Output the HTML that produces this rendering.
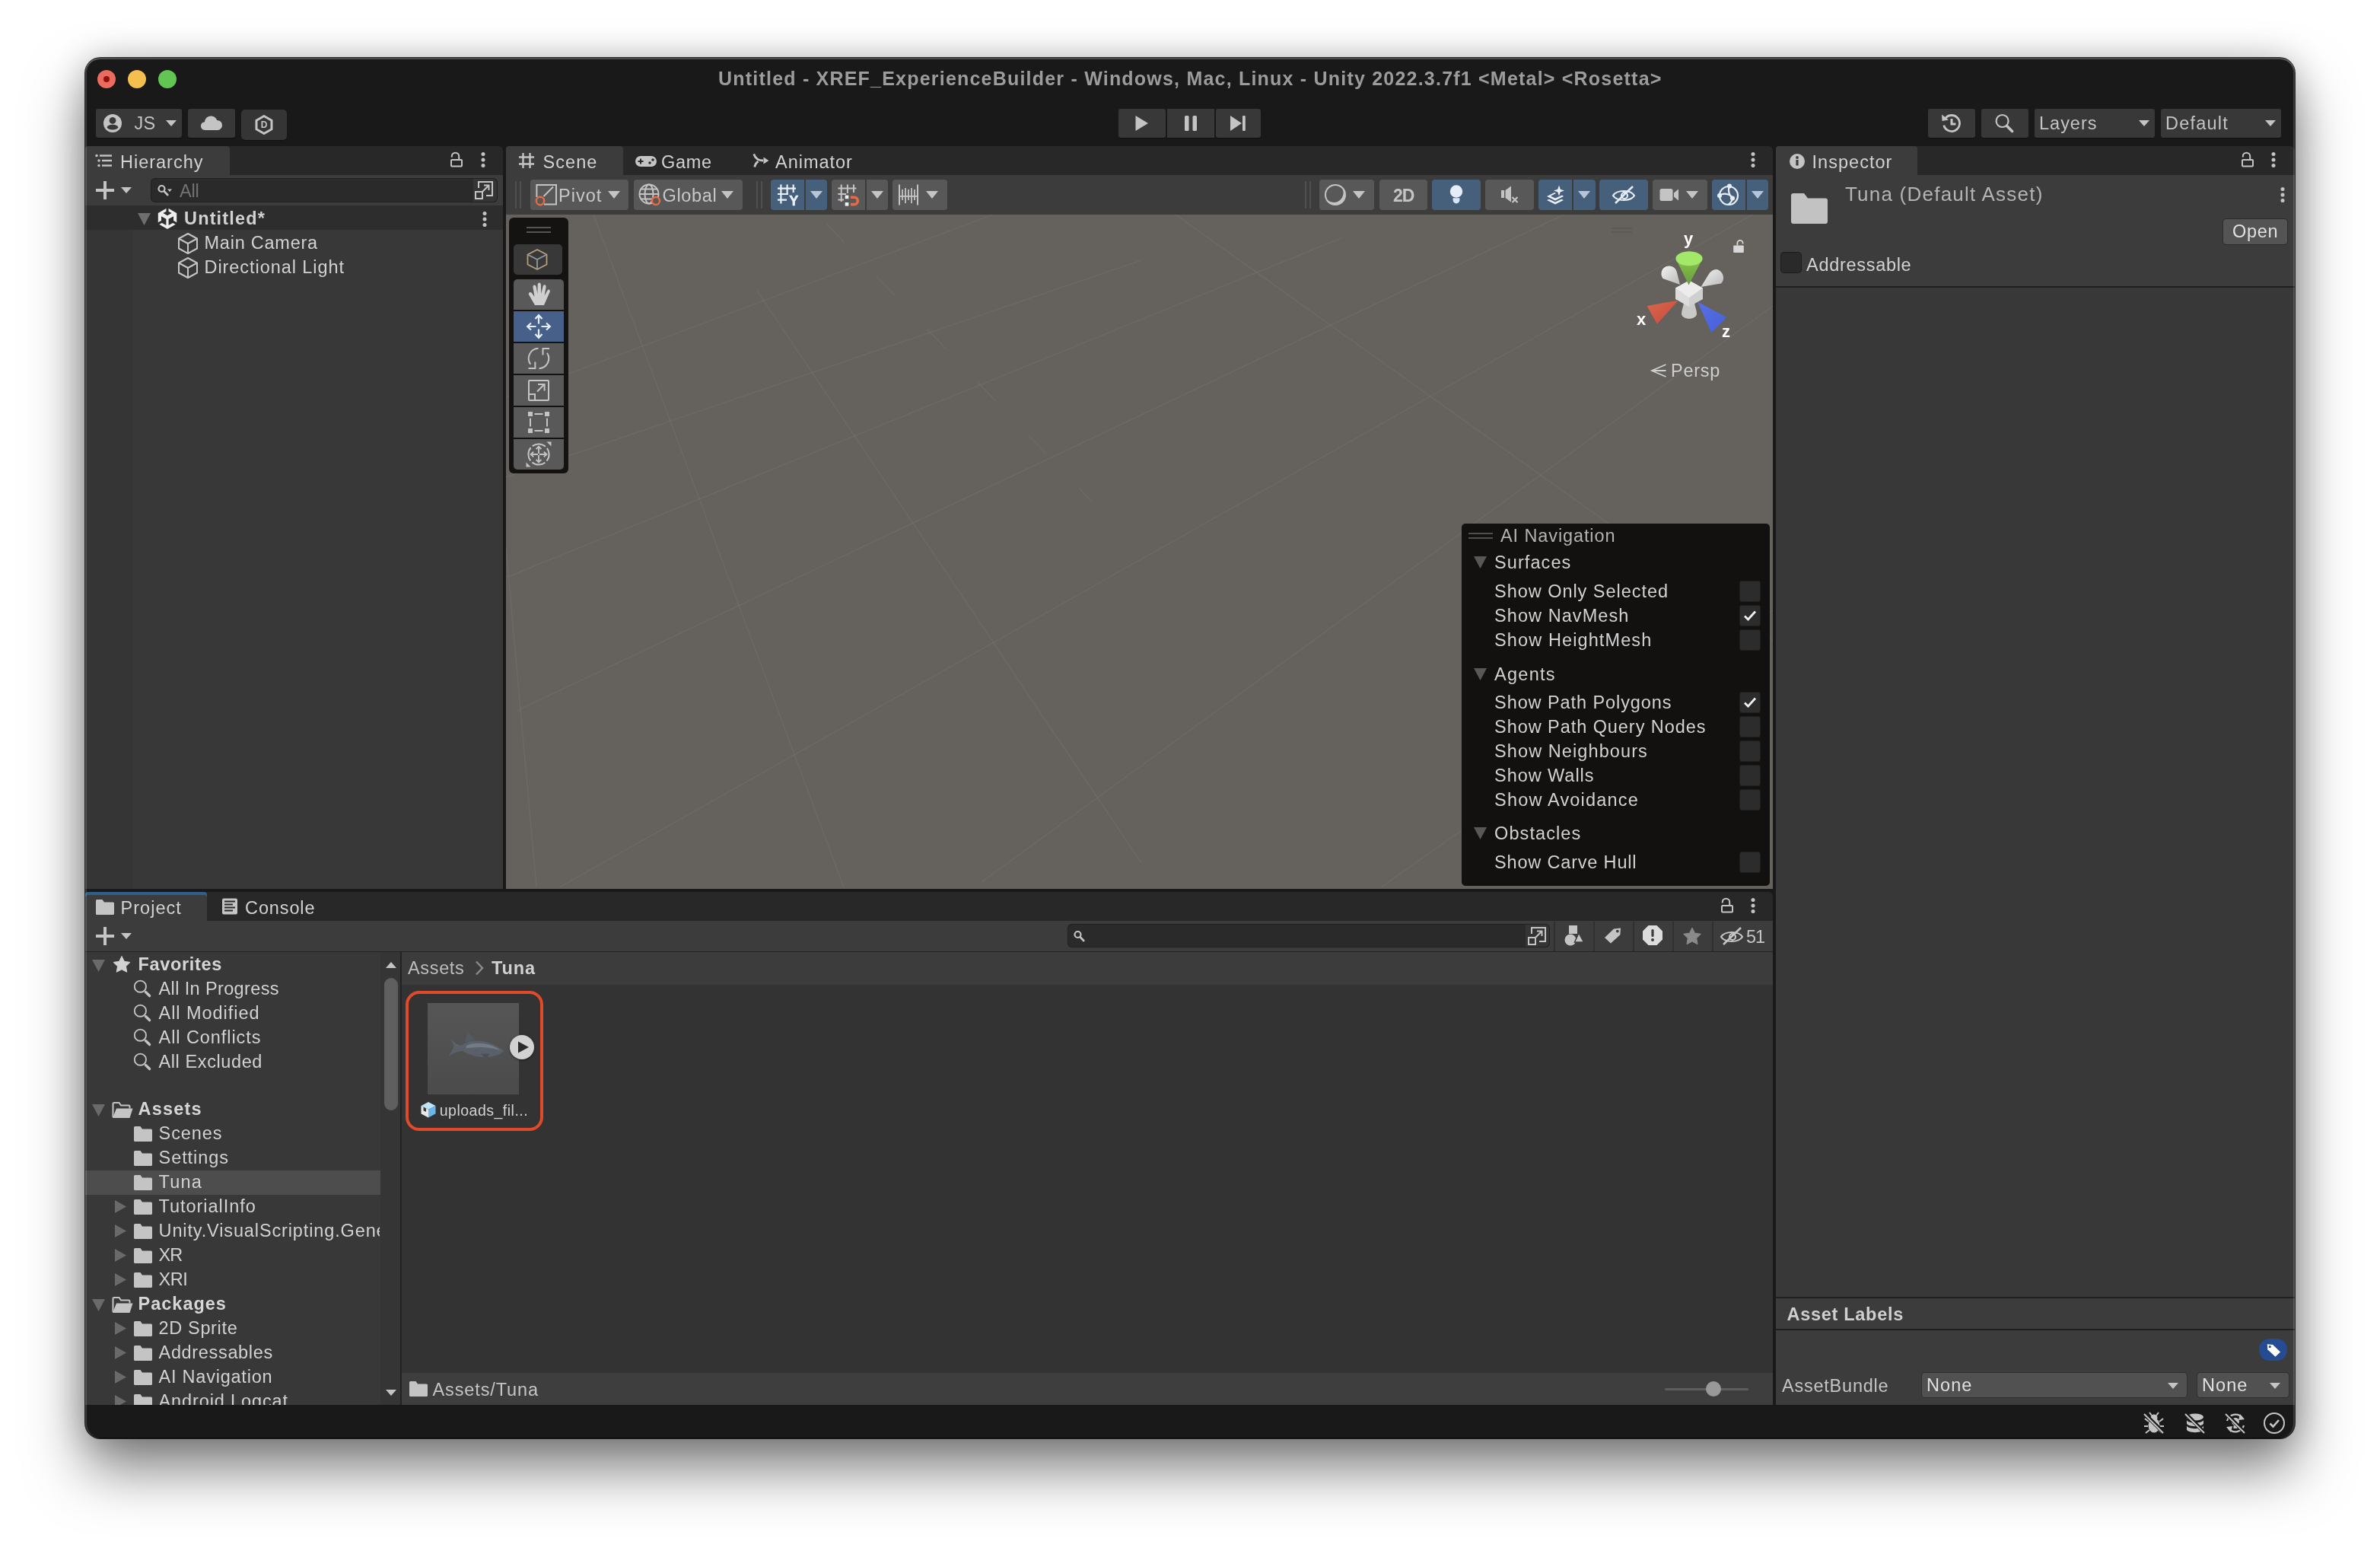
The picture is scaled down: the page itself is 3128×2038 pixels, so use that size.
<!DOCTYPE html>
<html lang="en"><head><meta charset="utf-8"><title>Untitled - XREF_ExperienceBuilder - Unity</title>
<style>
html,body{margin:0;padding:0;background:#fff;}
body{width:3128px;height:2038px;overflow:hidden;position:relative;font-family:'Liberation Sans', sans-serif;}
#shadow{position:absolute;left:112px;top:76px;width:2904px;height:1814px;border-radius:20px;
 box-shadow:0 0 0 1px rgba(0,0,0,.8),0 40px 76px rgba(0,0,0,.50),0 0 44px rgba(0,0,0,.20);background:#191919;}
#win{will-change:transform;position:absolute;left:0;top:0;width:3128px;height:2038px;clip-path:inset(76px 112px 148px 112px round 20px);background:#191919;}
#win div,#win svg,#win span{position:absolute;box-sizing:border-box;}
#win svg{overflow:visible;}
.t{white-space:pre;}
#rim{position:absolute;left:112px;top:76px;width:2904px;height:1814px;border-radius:20px;box-shadow:inset 0 2px 0 rgba(255,255,255,.22),inset 2px 0 0 rgba(255,255,255,.15),inset -2px 0 0 rgba(255,255,255,.15),inset 0 -1px 0 rgba(0,0,0,.5);pointer-events:none;}
</style></head>
<body>
<div id="shadow"></div>
<div id="win">
<div style="left:128px;top:92px;width:24px;height:24px;background:#ec6a5e;border-radius:50%;"></div>
<div style="left:168px;top:92px;width:24px;height:24px;background:#f5bf4f;border-radius:50%;"></div>
<div style="left:208px;top:92px;width:24px;height:24px;background:#62c554;border-radius:50%;"></div>
<div style="left:136px;top:100px;width:8px;height:8px;background:#8a1408;border-radius:50%;"></div>
<span class="t" style="left:944px;top:88.44px;font-size:25px;line-height:30px;color:#9c9c9c;font-weight:700;letter-spacing:1.21px;">Untitled - XREF_ExperienceBuilder - Windows, Mac, Linux - Unity 2022.3.7f1 &lt;Metal&gt; &lt;Rosetta&gt;</span>
<div style="left:126px;top:143px;width:113px;height:38px;background:#383838;border-radius:3px;box-shadow:0 1px 0 rgba(0,0,0,.35);"></div>
<svg style="left:135px;top:149px;" width="26" height="26" viewBox="-13 -13 26 26"><circle r="12" fill="#c4c4c4"/><circle cy="-3.6" r="4.4" fill="#383838"/><ellipse cx="0" cy="5.2" rx="7.2" ry="3.4" fill="#383838"/></svg>
<span class="t" style="left:176.56px;top:148.44px;font-size:23.5px;line-height:28px;color:#c4c4c4;letter-spacing:0.21px;">JS</span>
<svg style="left:217px;top:157px;" width="16" height="10" viewBox="-8 -5 16 10"><polygon points="-7.0,-4.0 7.0,-4.0 0,4.0" fill="#c4c4c4"/></svg>
<div style="left:247px;top:143px;width:62px;height:38px;background:#383838;border-radius:3px;box-shadow:0 1px 0 rgba(0,0,0,.35);"></div>
<svg style="left:262px;top:151px;" width="32" height="22" viewBox="-16 -11 32 22"><path d="M-8 9 C-12.5 9 -14 6 -14 3.5 C-14 0.5 -11.8 -1.6 -9 -1.8 C-8.6 -6.5 -5 -9.5 -0.8 -9.5 C3 -9.5 6 -7.4 7.2 -4 C11 -4 14 -1.2 14 2.6 C14 6.2 11.4 9 8 9 Z" fill="#c4c4c4" /></svg>
<div style="left:317px;top:144px;width:60px;height:40px;background:#353535;border-radius:5px;box-shadow:0 1px 0 rgba(0,0,0,.35);"></div>
<svg style="left:332px;top:149px;" width="30" height="30" viewBox="-15 -15 30 30"><polygon points="0,-11.5 10,-5.8 10,5.8 0,11.5 -10,5.8 -10,-5.8" fill="none" stroke="#c4c4c4" stroke-width="3" stroke-linejoin="round"/><text x="0" y="4.3" text-anchor="middle" font-family="Liberation Sans, sans-serif" font-weight="700" font-size="12" fill="#c4c4c4">D</text></svg>
<div style="left:1470px;top:143px;width:62px;height:38px;background:#383838;border-radius:3px;box-shadow:0 1px 0 rgba(0,0,0,.35);"></div>
<div style="left:1534px;top:143px;width:62px;height:38px;background:#383838;border-radius:0px;box-shadow:0 1px 0 rgba(0,0,0,.35);"></div>
<div style="left:1598px;top:143px;width:59px;height:38px;background:#383838;border-radius:3px;box-shadow:0 1px 0 rgba(0,0,0,.35);"></div>
<svg style="left:1489px;top:150px;" width="22" height="24" viewBox="-11 -12 22 24"><polygon points="-7.5,-10 9,0 -7.5,10" fill="#c4c4c4"/></svg>
<svg style="left:1554px;top:150px;" width="22" height="24" viewBox="-11 -12 22 24"><rect x="-8" y="-10" width="5.5" height="20" rx="1.5" fill="#c4c4c4"/><rect x="2.5" y="-10" width="5.5" height="20" rx="1.5" fill="#c4c4c4"/></svg>
<svg style="left:1615px;top:150px;" width="24" height="24" viewBox="-12 -12 24 24"><polygon points="-10,-10 5,0 -10,10" fill="#c4c4c4"/><rect x="6" y="-10" width="3.8" height="20" rx="1" fill="#c4c4c4"/></svg>
<div style="left:2534px;top:143px;width:62px;height:38px;background:#383838;border-radius:3px;box-shadow:0 1px 0 rgba(0,0,0,.35);"></div>
<svg style="left:2550px;top:147px;" width="30" height="30" viewBox="-15 -15 30 30"><path d="M-8.2 -6.6 A10.5 10.5 0 1 1 -10.2 2.6" fill="none" stroke="#c4c4c4" stroke-width="2.8"/><path d="M-13 -11.5 L-12.4 -3 L-4 -4.6 Z" fill="#c4c4c4"/><path d="M0 -6 V1 H5.4" fill="none" stroke="#c4c4c4" stroke-width="3"/></svg>
<div style="left:2604px;top:143px;width:62px;height:38px;background:#383838;border-radius:3px;box-shadow:0 1px 0 rgba(0,0,0,.35);"></div>
<svg style="left:2620px;top:148px;" width="28" height="28" viewBox="-14 -14 28 28"><circle cx="-2.4" cy="-3" r="8" fill="none" stroke="#c4c4c4" stroke-width="2.2"/><path d="M3.6 3.4 L10.6 10.4" stroke="#c4c4c4" stroke-width="3.6" stroke-linecap="round"/></svg>
<div style="left:2674px;top:143px;width:158px;height:38px;background:#383838;border-radius:3px;box-shadow:0 1px 0 rgba(0,0,0,.35);"></div>
<span class="t" style="left:2680.06px;top:148.44px;font-size:23.5px;line-height:28px;color:#c4c4c4;letter-spacing:0.97px;">Layers</span>
<svg style="left:2809.5px;top:157px;" width="16" height="10" viewBox="-8 -5 16 10"><polygon points="-7.0,-4.0 7.0,-4.0 0,4.0" fill="#c4c4c4"/></svg>
<div style="left:2840px;top:143px;width:158px;height:38px;background:#383838;border-radius:3px;box-shadow:0 1px 0 rgba(0,0,0,.35);"></div>
<span class="t" style="left:2846.06px;top:148.44px;font-size:23.5px;line-height:28px;color:#c4c4c4;letter-spacing:1.20px;">Default</span>
<svg style="left:2975.5px;top:157px;" width="16" height="10" viewBox="-8 -5 16 10"><polygon points="-7.0,-4.0 7.0,-4.0 0,4.0" fill="#c4c4c4"/></svg>
<div style="left:112px;top:192px;width:549px;height:38px;background:#282828;border-radius:6px 6px 0 0;"></div>
<div style="left:112px;top:192px;width:190px;height:38px;background:#3c3c3c;border-radius:4px 4px 0 0;"></div>
<div style="left:112px;top:230px;width:549px;height:40px;background:#3c3c3c;"></div>
<div style="left:112px;top:270px;width:549px;height:32px;background:#2d2d2d;"></div>
<div style="left:112px;top:302px;width:549px;height:866px;background:#383838;"></div>
<div style="left:112px;top:302px;width:63px;height:866px;background:#353535;"></div>
<svg style="left:124px;top:201px;" width="26" height="20" viewBox="-13 -10 26 20"><circle cx="-10" cy="-6.5" r="1.7" fill="#c4c4c4"/><rect x="-6" y="-7.7" width="16" height="2.4" fill="#c4c4c4"/><circle cx="-7" cy="0" r="1.7" fill="#c4c4c4"/><rect x="-3" y="-1.2" width="13" height="2.4" fill="#c4c4c4"/><circle cx="-7" cy="6.5" r="1.7" fill="#c4c4c4"/><rect x="-3" y="5.3" width="13" height="2.4" fill="#c4c4c4"/></svg>
<span class="t" style="left:158.06px;top:199.24px;font-size:23.5px;line-height:28px;color:#d2d2d2;letter-spacing:0.98px;">Hierarchy</span>
<svg style="left:590px;top:198px;" width="20" height="24" viewBox="-10 -12 20 24"><rect x="-7" y="0" width="14" height="8.5" rx="1" fill="none" stroke="#c4c4c4" stroke-width="2"/><path d="M-6.2 -3.4 V-4.6 A4.7 4.7 0 0 1 3.2 -4.6 V0" fill="none" stroke="#c4c4c4" stroke-width="2"/></svg>
<svg style="left:631px;top:198px;" width="8" height="24" viewBox="-4 -12 8 24"><circle cy="-7.5" r="2.5" fill="#c4c4c4"/><circle cy="0" r="2.5" fill="#c4c4c4"/><circle cy="7.5" r="2.5" fill="#c4c4c4"/></svg>
<svg style="left:125px;top:237px;" width="26" height="26" viewBox="-13 -13 26 26"><rect x="-12" y="-2" width="24" height="4" fill="#c4c4c4"/><rect x="-2" y="-12" width="4" height="24" fill="#c4c4c4"/></svg>
<svg style="left:158px;top:245px;" width="16" height="10" viewBox="-8 -5 16 10"><polygon points="-7.0,-4.0 7.0,-4.0 0,4.0" fill="#c4c4c4"/></svg>
<div style="left:198px;top:234px;width:456px;height:32px;background:#2a2a2a;border-radius:6px;box-shadow:inset 0 0 0 1px #212121;"></div>
<div style="left:622px;top:235px;width:31px;height:30px;background:#353535;border-radius:0 5px 5px 0;"></div>
<svg style="left:203px;top:241px;" width="24" height="18" viewBox="-12 -9 24 18"><circle cx="-2.5" cy="-2" r="4" fill="none" stroke="#c4c4c4" stroke-width="2.2"/><path d="M0.8 1.4 L5.2 6" stroke="#c4c4c4" stroke-width="2.8" stroke-linecap="round"/><polygon points="5,-1.5 11,-1.5 8,2" fill="#c4c4c4"/></svg>
<span class="t" style="left:236.06px;top:236.94px;font-size:23.5px;line-height:28px;color:#727272;letter-spacing:-0.26px;">All</span>
<svg style="left:622px;top:236px;" width="28" height="28" viewBox="-14 -14 28 28"><path d="M-7 -3 V-11 H11 V7 H3" fill="none" stroke="#c4c4c4" stroke-width="2"/><rect x="-11" y="2" width="9" height="9" fill="none" stroke="#c4c4c4" stroke-width="2"/><path d="M-2 2 L6 -6 M0 -6.5 H6.5 V0" fill="none" stroke="#c4c4c4" stroke-width="2"/></svg>
<svg style="left:179.5px;top:279px;" width="19" height="18" viewBox="-9.5 -9 19 18"><polygon points="-8.5,-8.0 8.5,-8.0 0,8.0" fill="#6e6e6e"/></svg>
<svg style="left:206px;top:272px;" width="28" height="30" viewBox="-14 -15 28 30"><polygon points="0,-14 12.2,-7 12.2,7 0,14 -12.2,7 -12.2,-7" fill="#ededed"/><polygon points="0,-10 5.6,-6.9 0,-3.8 -5.6,-6.9" fill="#2d2d2d"/><polygon points="-8,-2.8 -1.6,0.8 -1.6,9 -8,5.4" fill="#2d2d2d"/><polygon points="8,-2.8 1.6,0.8 1.6,9 8,5.4" fill="#2d2d2d"/><path d="M0 -14.5 V-9 M-12.6 7.3 L-7.6 4.4 M12.6 7.3 L7.6 4.4" stroke="#2d2d2d" stroke-width="3" fill="none"/></svg>
<span class="t" style="left:242.06px;top:272.94px;font-size:23.5px;line-height:28px;color:#d2d2d2;font-weight:700;letter-spacing:1.14px;">Untitled*</span>
<svg style="left:633px;top:276px;" width="8" height="24" viewBox="-4 -12 8 24"><circle cy="-7.5" r="2.5" fill="#c4c4c4"/><circle cy="0" r="2.5" fill="#c4c4c4"/><circle cy="7.5" r="2.5" fill="#c4c4c4"/></svg>
<svg style="left:232px;top:304px;" width="30" height="32" viewBox="-15 -16 30 32"><path d="M0 -13 L12 -6.5 V6.5 L0 13 L-12 6.5 V-6.5 Z M-12 -6.5 L0 0 L12 -6.5 M0 0 V13" fill="none" stroke="#c4c4c4" stroke-width="2" stroke-linejoin="round"/></svg>
<span class="t" style="left:268.56px;top:304.94px;font-size:23.5px;line-height:28px;color:#d2d2d2;letter-spacing:0.75px;">Main Camera</span>
<svg style="left:232px;top:336px;" width="30" height="32" viewBox="-15 -16 30 32"><path d="M0 -13 L12 -6.5 V6.5 L0 13 L-12 6.5 V-6.5 Z M-12 -6.5 L0 0 L12 -6.5 M0 0 V13" fill="none" stroke="#c4c4c4" stroke-width="2" stroke-linejoin="round"/></svg>
<span class="t" style="left:268.56px;top:336.94px;font-size:23.5px;line-height:28px;color:#d2d2d2;letter-spacing:0.93px;">Directional Light</span>
<div style="left:665px;top:192px;width:1665px;height:38px;background:#282828;border-radius:6px 6px 0 0;"></div>
<div style="left:665px;top:192px;width:154px;height:38px;background:#3c3c3c;border-radius:4px 4px 0 0;"></div>
<svg style="left:680px;top:199px;" width="24" height="24" viewBox="-12 -12 24 24"><path d="M-4.5 -10 V10 M4.5 -10 V10 M-10 -4.5 H10 M-10 4.5 H10" stroke="#c4c4c4" stroke-width="2.4" fill="none"/></svg>
<span class="t" style="left:713.56px;top:199.24px;font-size:23.5px;line-height:28px;color:#d2d2d2;letter-spacing:1.04px;">Scene</span>
<svg style="left:833px;top:203px;" width="32" height="18" viewBox="-16 -9 32 18"><rect x="-14" y="-7" width="28" height="14" rx="7" fill="#c4c4c4"/><path d="M-10.5 0 H-3.5 M-7 -3.5 V3.5" stroke="#282828" stroke-width="2"/><circle cx="5" cy="2" r="1.8" fill="#282828"/><circle cx="9" cy="-2" r="1.8" fill="#282828"/></svg>
<span class="t" style="left:869.06px;top:199.24px;font-size:23.5px;line-height:28px;color:#d2d2d2;letter-spacing:0.71px;">Game</span>
<svg style="left:987px;top:199px;" width="26" height="24" viewBox="-13 -12 26 24"><path d="M-9.2 -8.6 C-7.5 -3 -4 0 3 0 M-8.2 8.6 C-7.6 5 -6 2.6 -3.4 1" fill="none" stroke="#c4c4c4" stroke-width="2.8"/><polygon points="3.5,-4.4 10.4,0 3.5,4.4" fill="#c4c4c4"/></svg>
<span class="t" style="left:1019.06px;top:199.24px;font-size:23.5px;line-height:28px;color:#d2d2d2;letter-spacing:0.98px;">Animator</span>
<svg style="left:2300px;top:198px;" width="8" height="24" viewBox="-4 -12 8 24"><circle cy="-7.5" r="2.5" fill="#c4c4c4"/><circle cy="0" r="2.5" fill="#c4c4c4"/><circle cy="7.5" r="2.5" fill="#c4c4c4"/></svg>
<div style="left:665px;top:230px;width:1665px;height:52px;background:#3c3c3c;"></div>
<div style="left:665px;top:282px;width:1665px;height:886px;background:#65615c;"></div>
<svg style="left:665px;top:282px;overflow:hidden" width="1665" height="886" viewBox="0 0 1665 886"><g stroke="#ffffff" stroke-opacity="0.06" stroke-width="1.3" fill="none"><line x1="115" y1="0" x2="444" y2="884"/><line x1="330" y1="100" x2="835" y2="852"/><line x1="0" y1="438" x2="40" y2="884"/><line x1="880" y1="0" x2="1665" y2="560"/><line x1="14" y1="652" x2="1665" y2="-130"/><line x1="70" y1="884" x2="1665" y2="-15"/><line x1="625" y1="877" x2="1665" y2="120"/><line x1="1150" y1="884" x2="1665" y2="520"/><line x1="0" y1="477" x2="1100" y2="30"/><line x1="0" y1="345" x2="835" y2="60"/><line x1="0" y1="240" x2="640" y2="0"/><line x1="421" y1="12" x2="770" y2="377" stroke-dasharray="34 62"/></g></svg>
<div style="left:677px;top:238px;width:2px;height:36px;background:#4f4f4f;"></div>
<div style="left:683px;top:238px;width:2px;height:36px;background:#4f4f4f;"></div>
<div style="left:697px;top:236px;width:129px;height:40px;background:#585858;border-radius:4px;"></div>
<svg style="left:702px;top:240px;" width="32" height="32" viewBox="-16 -16 32 32"><path d="M-12.6 3 V-13 H13 V12.6 H-3" fill="none" stroke="#c4c4c4" stroke-width="2"/><path d="M-3.5 2 L9 -10.5" stroke="#c4c4c4" stroke-width="2"/><circle cx="-8" cy="8" r="5.2" fill="none" stroke="#e86a45" stroke-width="2.4"/></svg>
<span class="t" style="left:734.06px;top:242.94px;font-size:23.5px;line-height:28px;color:#c8c8c8;letter-spacing:1.02px;">Pivot</span>
<svg style="left:798px;top:250px;" width="18" height="12" viewBox="-9 -6 18 12"><polygon points="-8.0,-5.0 8.0,-5.0 0,5.0" fill="#c4c4c4"/></svg>
<div style="left:832.5px;top:236px;width:143.5px;height:40px;background:#585858;border-radius:4px;"></div>
<svg style="left:838px;top:240px;" width="32" height="32" viewBox="-16 -16 32 32"><circle cx="-1" cy="-1" r="12.5" fill="none" stroke="#c4c4c4" stroke-width="2"/><ellipse cx="-1" cy="-1" rx="5.5" ry="12.5" fill="none" stroke="#c4c4c4" stroke-width="2"/><path d="M-13.5 -1 H11.5 M-11 -7.5 H9 M-11 5.5 H4" stroke="#c4c4c4" stroke-width="2"/><circle cx="8" cy="8" r="5" fill="#585858" stroke="#e86a45" stroke-width="2.4"/></svg>
<span class="t" style="left:870.56px;top:242.94px;font-size:23.5px;line-height:28px;color:#c8c8c8;letter-spacing:0.65px;">Global</span>
<svg style="left:947px;top:250px;" width="18" height="12" viewBox="-9 -6 18 12"><polygon points="-8.0,-5.0 8.0,-5.0 0,5.0" fill="#c4c4c4"/></svg>
<div style="left:994px;top:238px;width:2px;height:36px;background:#4f4f4f;"></div>
<div style="left:1000px;top:238px;width:2px;height:36px;background:#4f4f4f;"></div>
<div style="left:1013px;top:236px;width:44px;height:40px;background:#46607c;border-radius:4px 0 0 4px;"></div>
<svg style="left:1020px;top:241px;" width="30" height="30" viewBox="-15 -15 30 30"><path d="M-8.6 -13.5 V11.5 M-0.4 -13.5 V-2 M7.7 -13.5 V-3 M-13 -8.4 H11 M-13 -1 H1 M-13 6.6 H-1" stroke="#eaf0f8" stroke-width="2.2" fill="none"/><text x="8.2" y="13.6" text-anchor="middle" font-family="Liberation Sans, sans-serif" font-weight="700" font-size="18" fill="#eaf0f8" stroke="#eaf0f8" stroke-width="0.6">Y</text></svg>
<div style="left:1059px;top:236px;width:28px;height:40px;background:#46607c;border-radius:0 4px 4px 0;"></div>
<svg style="left:1064px;top:250px;" width="18" height="12" viewBox="-9 -6 18 12"><polygon points="-8.0,-5.0 8.0,-5.0 0,5.0" fill="#b6c6d8"/></svg>
<div style="left:1093px;top:236px;width:43.5px;height:40px;background:#585858;border-radius:4px 0 0 4px;"></div>
<svg style="left:1100px;top:241px;" width="30" height="30" viewBox="-15 -15 30 30"><path d="M-9.3 -13.5 V9 M-1.1 -13.5 V-2 M7 -13.5 V-3 M-13.6 -8.4 H10.4 M-13.6 -1 H-3 M-13.6 6.6 H-6" stroke="#c4c4c4" stroke-width="2" fill="none"/><path d="M3 3.2 H7.6 A4.7 4.7 0 0 1 7.6 12.6 H3" fill="none" stroke="#e86a45" stroke-width="3.6"/><rect x="-4.3" y="0.6" width="4.6" height="4.6" fill="#f0f0f0"/><rect x="-4.3" y="10" width="4.6" height="4.6" fill="#f0f0f0"/></svg>
<div style="left:1138.5px;top:236px;width:28.5px;height:40px;background:#585858;border-radius:0 4px 4px 0;"></div>
<svg style="left:1144px;top:250px;" width="18" height="12" viewBox="-9 -6 18 12"><polygon points="-8.0,-5.0 8.0,-5.0 0,5.0" fill="#c4c4c4"/></svg>
<div style="left:1173px;top:236px;width:71.5px;height:40px;background:#585858;border-radius:4px;"></div>
<svg style="left:1179px;top:241px;" width="30" height="30" viewBox="-15 -15 30 30"><rect x="-13" y="-13.5" width="2" height="27" fill="#c4c4c4"/><rect x="11" y="-13.5" width="2" height="27" fill="#c4c4c4"/><rect x="-8.9" y="-7" width="1.8" height="14" fill="#c4c4c4"/><rect x="-4.9" y="-9" width="1.8" height="20" fill="#c4c4c4"/><rect x="-0.9" y="-7" width="1.8" height="14" fill="#c4c4c4"/><rect x="3.1" y="-9" width="1.8" height="20" fill="#c4c4c4"/><rect x="7.1" y="-7" width="1.8" height="14" fill="#c4c4c4"/><rect x="-12" y="1" width="24" height="1.8" fill="#c4c4c4"/></svg>
<svg style="left:1216px;top:250px;" width="18" height="12" viewBox="-9 -6 18 12"><polygon points="-8.0,-5.0 8.0,-5.0 0,5.0" fill="#c4c4c4"/></svg>
<div style="left:1715px;top:238px;width:2px;height:36px;background:#4f4f4f;"></div>
<div style="left:1721px;top:238px;width:2px;height:36px;background:#4f4f4f;"></div>
<div style="left:1734px;top:236px;width:72px;height:40px;background:#585858;border-radius:4px;"></div>
<svg style="left:1739px;top:240px;" width="32" height="32" viewBox="-16 -16 32 32"><circle r="13" fill="none" stroke="#c4c4c4" stroke-width="2"/><path d="M8 -10.2 A13 13 0 1 1 -12 5 A11.5 11.5 0 0 0 8 -10.2 Z" fill="#c4c4c4"/></svg>
<svg style="left:1777px;top:250px;" width="18" height="12" viewBox="-9 -6 18 12"><polygon points="-8.0,-5.0 8.0,-5.0 0,5.0" fill="#c4c4c4"/></svg>
<div style="left:1812.5px;top:236px;width:63.5px;height:40px;background:#585858;border-radius:4px;"></div>
<span class="t" style="left:1831.08px;top:242.94px;font-size:23px;line-height:28px;color:#c4c4c4;font-weight:700;letter-spacing:-1.20px;">2D</span>
<div style="left:1882px;top:236px;width:64px;height:40px;background:#46607c;border-radius:4px;"></div>
<svg style="left:1902px;top:240px;" width="24" height="32" viewBox="-12 -16 24 32"><circle cy="-4.5" r="8.2" fill="#e6edf7"/><path d="M-4.4 4.2 H4.4 V7 A4.4 4.4 0 0 1 -4.4 7 Z" fill="#d4e6fb"/></svg>
<div style="left:1952px;top:236px;width:64px;height:40px;background:#585858;border-radius:4px;"></div>
<svg style="left:1970px;top:242px;" width="28" height="28" viewBox="-14 -14 28 28"><rect x="-11" y="-6" width="4" height="10" fill="#c4c4c4"/><path d="M-5.5 -6 L2 -11.5 V9.5 L-5.5 4 Z" fill="#c4c4c4"/><path d="M3.5 3 L10.5 10 M10.5 3 L3.5 10" stroke="#c4c4c4" stroke-width="2.2"/></svg>
<div style="left:2022px;top:236px;width:44px;height:40px;background:#46607c;border-radius:4px 0 0 4px;"></div>
<svg style="left:2029px;top:241px;" width="30" height="30" viewBox="-15 -15 30 30"><path d="M-11 2 L-1 -3 L1 -2 L-6 1.5 L0 4.5 L9 0.5 L11 2 L0 7.5 Z" fill="#e8eef6"/><path d="M-11 7 L0 12.5 L11 7 L8 5.8 L0 9.6 L-8 5.8 Z" fill="#e8eef6"/><path d="M5 -12.5 L6.8 -7.3 L12 -5.5 L6.8 -3.7 L5 1.5 L3.2 -3.7 L-2 -5.5 L3.2 -7.3 Z" fill="#e8eef6"/></svg>
<div style="left:2068px;top:236px;width:29px;height:40px;background:#46607c;border-radius:0 4px 4px 0;"></div>
<svg style="left:2073px;top:250px;" width="18" height="12" viewBox="-9 -6 18 12"><polygon points="-8.0,-5.0 8.0,-5.0 0,5.0" fill="#b6c6d8"/></svg>
<div style="left:2102px;top:236px;width:64px;height:40px;background:#46607c;border-radius:4px;"></div>
<svg style="left:2117px;top:242px;" width="34" height="28" viewBox="-17 -14 34 28"><path d="M-14 1 C-9 -7 9 -7 14 1 C9 9 -9 9 -14 1 Z" fill="none" stroke="#e4ecf6" stroke-width="2.2"/><circle cx="1" cy="1" r="4" fill="none" stroke="#e4ecf6" stroke-width="2.2"/><path d="M-11 11 L12 -11" stroke="#e4ecf6" stroke-width="2.6"/></svg>
<div style="left:2172px;top:236px;width:72px;height:40px;background:#585858;border-radius:4px;"></div>
<svg style="left:2180px;top:245px;" width="28" height="22" viewBox="-14 -11 28 22"><rect x="-12.5" y="-8" width="17" height="16" rx="2.5" fill="#c4c4c4"/><path d="M6 -2.5 L12 -7.5 V7.5 L6 2.5 Z" fill="#c4c4c4"/></svg>
<svg style="left:2215px;top:250px;" width="18" height="12" viewBox="-9 -6 18 12"><polygon points="-8.0,-5.0 8.0,-5.0 0,5.0" fill="#c4c4c4"/></svg>
<div style="left:2250px;top:236px;width:44px;height:40px;background:#46607c;border-radius:4px 0 0 4px;"></div>
<svg style="left:2255px;top:239px;" width="34" height="34" viewBox="-17 -17 34 34"><circle cx="0" cy="1" r="12" fill="none" stroke="#e8eef6" stroke-width="2.2"/><path d="M-12 1 C-6 -4 4 0 5 4.5 M1 -11 C-2 -5 2 2 5 4.5 M5 4.5 C4 9 1 12 -1 13" fill="none" stroke="#e8eef6" stroke-width="2.2"/><circle cx="1" cy="-11.5" r="3" fill="#e8eef6"/><circle cx="-12" cy="1" r="3" fill="#e8eef6"/><circle cx="5" cy="4.5" r="3" fill="#e8eef6"/></svg>
<div style="left:2296px;top:236px;width:28px;height:40px;background:#46607c;border-radius:0 4px 4px 0;"></div>
<svg style="left:2301px;top:250px;" width="18" height="12" viewBox="-9 -6 18 12"><polygon points="-8.0,-5.0 8.0,-5.0 0,5.0" fill="#b6c6d8"/></svg>
<div style="left:669px;top:286px;width:78px;height:336px;background:#141312;border-radius:6px;"></div>
<div style="left:692px;top:298px;width:32px;height:2px;background:#555;"></div>
<div style="left:692px;top:304px;width:32px;height:2px;background:#555;"></div>
<div style="left:675px;top:321px;width:64px;height:40px;background:#383838;border-radius:5px;"></div>
<svg style="left:691px;top:325px;" width="30" height="32" viewBox="-15 -16 30 32"><path d="M0 -13 L12.5 -6.5 V6.5 L0 13 L-12.5 6.5 V-6.5 Z" fill="none" stroke="#b59e7c" stroke-width="1.8" stroke-linejoin="round"/><path d="M-12.5 -6.5 L0 0 L12.5 -6.5 M0 0 V13" fill="none" stroke="#8f9aa0" stroke-width="1.8"/></svg>
<div style="left:675px;top:367px;width:66px;height:40px;background:#595959;border-radius:5px 5px 0 0;"></div>
<svg style="left:691px;top:370px;" width="34" height="34" viewBox="-17 -17 34 34"><path d="M-5 14 L-12.5 1 C-14.5 -2.5 -11 -4.5 -9 -2 L-5.5 3 L-7.5 -9.5 C-8 -13 -4 -13.6 -3.4 -10.4 L-1.6 -1 L-1.3 -13 C-1.2 -16.4 2.8 -16.4 2.9 -13 L3.2 -1 L5.6 -10.8 C6.4 -14 10.2 -13 9.6 -9.8 L7.6 1.5 L11.2 -5 C12.8 -7.8 15.8 -6.2 14.6 -3.2 L7 14 Z" fill="#cfcfcf"/></svg>
<div style="left:675px;top:409px;width:66px;height:40px;background:#46608a;border-radius:0;"></div>
<svg style="left:691px;top:412px;" width="34" height="34" viewBox="-17 -17 34 34"><g transform="rotate(0)"><path d="M0 -3.5 V-14 M-4.5 -10 L0 -14.8 L4.5 -10" fill="none" stroke="#e8eef6" stroke-width="2.2"/></g><g transform="rotate(90)"><path d="M0 -3.5 V-14 M-4.5 -10 L0 -14.8 L4.5 -10" fill="none" stroke="#e8eef6" stroke-width="2.2"/></g><g transform="rotate(180)"><path d="M0 -3.5 V-14 M-4.5 -10 L0 -14.8 L4.5 -10" fill="none" stroke="#e8eef6" stroke-width="2.2"/></g><g transform="rotate(270)"><path d="M0 -3.5 V-14 M-4.5 -10 L0 -14.8 L4.5 -10" fill="none" stroke="#e8eef6" stroke-width="2.2"/></g></svg>
<div style="left:675px;top:451px;width:66px;height:40px;background:#595959;border-radius:0;"></div>
<svg style="left:691px;top:454px;" width="34" height="34" viewBox="-17 -17 34 34"><path d="M-0.5 -13.2 A13.2 13.2 0 0 0 -10.8 7.6 M0.5 13.2 A13.2 13.2 0 0 0 11 -7.3" fill="none" stroke="#c4c4c4" stroke-width="2"/><path d="M5.5 -4.6 V-12.9 H14.1 M-4.65 4.5 V13.1 H-13.5" fill="none" stroke="#c4c4c4" stroke-width="2"/></svg>
<div style="left:675px;top:493px;width:66px;height:40px;background:#595959;border-radius:0;"></div>
<svg style="left:691px;top:496px;" width="34" height="34" viewBox="-17 -17 34 34"><rect x="-13" y="-13" width="26" height="26" rx="1" fill="none" stroke="#c4c4c4" stroke-width="2"/><path d="M-13 5 H-5 V13" fill="none" stroke="#c4c4c4" stroke-width="2"/><path d="M-2 1.5 L7.2 -7.7 M-1 -8 H7.6 V0.6" fill="none" stroke="#c4c4c4" stroke-width="2"/></svg>
<div style="left:675px;top:535px;width:66px;height:40px;background:#595959;border-radius:0;"></div>
<svg style="left:691px;top:538px;" width="34" height="34" viewBox="-17 -17 34 34"><rect x="-14" y="-14" width="6" height="6" fill="#c4c4c4"/><rect x="-14" y="8" width="6" height="6" fill="#c4c4c4"/><rect x="8" y="-14" width="6" height="6" fill="#c4c4c4"/><rect x="8" y="8" width="6" height="6" fill="#c4c4c4"/><path d="M-5.5 -11 H5.5 M-5.5 11 H5.5 M-11 -5.5 V5.5 M11 -5.5 V5.5" stroke="#c4c4c4" stroke-width="2"/></svg>
<div style="left:675px;top:577px;width:66px;height:40px;background:#595959;border-radius:0 0 5px 5px;"></div>
<svg style="left:690px;top:579px;" width="36" height="36" viewBox="-18 -18 36 36"><g transform="rotate(0)"><path d="M0 -1 V-10 M-3.4 -6.8 L0 -10.4 L3.4 -6.8" fill="none" stroke="#c4c4c4" stroke-width="1.9"/></g><g transform="rotate(90)"><path d="M0 -1 V-10 M-3.4 -6.8 L0 -10.4 L3.4 -6.8" fill="none" stroke="#c4c4c4" stroke-width="1.9"/></g><g transform="rotate(180)"><path d="M0 -1 V-10 M-3.4 -6.8 L0 -10.4 L3.4 -6.8" fill="none" stroke="#c4c4c4" stroke-width="1.9"/></g><g transform="rotate(270)"><path d="M0 -1 V-10 M-3.4 -6.8 L0 -10.4 L3.4 -6.8" fill="none" stroke="#c4c4c4" stroke-width="1.9"/></g><circle r="13.6" fill="none" stroke="#c4c4c4" stroke-width="2" stroke-dasharray="18.4 2.96" stroke-dashoffset="9.2"/><polygon points="10.5,-16.5 16.5,-16.5 16.5,-10.5" fill="#c4c4c4"/><polygon points="-10.5,16.5 -16.5,16.5 -16.5,10.5" fill="#c4c4c4"/></svg>
<div style="left:2117px;top:299px;width:28px;height:1.5px;background:rgba(0,0,0,.07);"></div>
<div style="left:2117px;top:304px;width:28px;height:1.5px;background:rgba(0,0,0,.07);"></div>
<svg style="left:0;top:0" width="3128" height="600" viewBox="0 0 3128 600">
<defs>
<linearGradient id="gzc" x1="0" y1="0" x2="1" y2="1"><stop offset="0" stop-color="#f2f2f2"/><stop offset="1" stop-color="#b9b9b9"/></linearGradient>
<linearGradient id="gzg" x1="0" y1="0" x2="0" y2="1"><stop offset="0" stop-color="#84c24c"/><stop offset="1" stop-color="#6a9a3e"/></linearGradient>
<linearGradient id="gzr" x1="0" y1="0" x2="1" y2="1"><stop offset="0" stop-color="#d9674d"/><stop offset="1" stop-color="#c94a3c"/></linearGradient>
<linearGradient id="gzb" x1="0" y1="0" x2="1" y2="1"><stop offset="0" stop-color="#5a6fe6"/><stop offset="1" stop-color="#4560d8"/></linearGradient>
</defs>
<path d="M2208 374 L2185.5 366 C2181 360 2184 350 2193 349.5 C2199 349 2203 353 2204 358 Z" fill="url(#gzc)"/>
<path d="M2235.5 377 L2262 372.5 C2267 368 2266 358 2258 354.5 C2253 353 2249 356 2246 360 Z" fill="url(#gzc)"/>
<path d="M2213 398 L2227 398 C2228 404 2230 408 2230 412 C2230 421 2210 421 2210 412 C2210 408 2212 404 2213 398 Z" fill="#c9c9c9"/>
<polygon points="2220,368.5 2238,378.5 2238,392.5 2220,402.5 2202,392.5 2202,378.5" fill="#d2d2d2"/>
<polygon points="2220,368.5 2238,378.5 2220,391.5 2202,378.5" fill="#ececec"/>
<polygon points="2202,378.5 2220,391.5 2220,403 2202,393" fill="#dcdcdc"/>
<polygon points="2238,378.5 2220,391.5 2220,403 2238,393" fill="#cfcfcf"/>
<path d="M2203.5 342 L2219.5 374.5 L2236.5 342 Z" fill="url(#gzg)"/>
<ellipse cx="2220" cy="339.7" rx="17.6" ry="9.5" fill="#a3e868"/>
<polygon points="2206,394.5 2164.5,402 2178,425.7" fill="url(#gzr)"/>
<polygon points="2231,396.6 2269.5,417 2249.2,437.2" fill="url(#gzb)"/>
</svg>
<span class="t" style="left:2213.12px;top:300.64px;font-size:22px;line-height:26px;color:#ffffff;font-weight:700;">y</span>
<span class="t" style="left:2151.12px;top:406.64px;font-size:22px;line-height:26px;color:#ffffff;font-weight:700;">x</span>
<span class="t" style="left:2263.12px;top:423.14px;font-size:22px;line-height:26px;color:#ffffff;font-weight:700;">z</span>
<svg style="left:2275px;top:312px;" width="20" height="24" viewBox="-10 -12 20 24"><rect x="-6.8" y="-1.5" width="13.6" height="9.6" rx="1" fill="#d8d8d8"/><path d="M-1.6 -1.5 V-4.6 A3.6 3.6 0 0 1 5.6 -4.6 V-3.4" fill="none" stroke="#d8d8d8" stroke-width="1.8"/></svg>
<svg style="left:2168px;top:475px;" width="24" height="24" viewBox="-12 -12 24 24"><path d="M9.5 -8 L-9 0 L9.5 8 M-9 0 H9.5" fill="none" stroke="#cfcfcf" stroke-width="1.8"/></svg>
<span class="t" style="left:2196.06px;top:473.44px;font-size:23.5px;line-height:28px;color:#cfcfcf;letter-spacing:0.69px;">Persp</span>
<div style="left:1920.5px;top:687.5px;width:405.5px;height:476.5px;background:#131110;border-radius:5px;"></div>
<div style="left:1930px;top:700px;width:32px;height:2px;background:#4e4e4e;"></div>
<div style="left:1930px;top:706px;width:32px;height:2px;background:#4e4e4e;"></div>
<span class="t" style="left:1972.06px;top:690.44px;font-size:23.5px;line-height:28px;color:#b2b2b2;letter-spacing:0.89px;">AI Navigation</span>
<svg style="left:1935.5px;top:730px;" width="19" height="18" viewBox="-9.5 -9 19 18"><polygon points="-8.5,-8.0 8.5,-8.0 0,8.0" fill="#585858"/></svg>
<span class="t" style="left:1964.06px;top:725.44px;font-size:23.5px;line-height:28px;color:#d2d2d2;letter-spacing:1.07px;">Surfaces</span>
<span class="t" style="left:1964.06px;top:763.44px;font-size:23.5px;line-height:28px;color:#d2d2d2;letter-spacing:0.96px;">Show Only Selected</span>
<div style="left:2286px;top:763px;width:28px;height:28px;background:#2c2c2c;border-radius:4px;box-shadow:inset 0 0 0 1px #1e1e1e;"></div>
<span class="t" style="left:1964.06px;top:795.44px;font-size:23.5px;line-height:28px;color:#d2d2d2;letter-spacing:1.06px;">Show NavMesh</span>
<div style="left:2286px;top:795px;width:28px;height:28px;background:#2c2c2c;border-radius:4px;box-shadow:inset 0 0 0 1px #1e1e1e;"></div>
<svg style="left:2288px;top:797px;" width="24" height="24" viewBox="-12 -12 24 24"><path d="M-7 0.5 L-2.5 5 L7 -5.5" fill="none" stroke="#f0f0f0" stroke-width="2.8"/></svg>
<span class="t" style="left:1964.06px;top:827.44px;font-size:23.5px;line-height:28px;color:#d2d2d2;letter-spacing:1.11px;">Show HeightMesh</span>
<div style="left:2286px;top:827px;width:28px;height:28px;background:#2c2c2c;border-radius:4px;box-shadow:inset 0 0 0 1px #1e1e1e;"></div>
<svg style="left:1935.5px;top:876.5px;" width="19" height="18" viewBox="-9.5 -9 19 18"><polygon points="-8.5,-8.0 8.5,-8.0 0,8.0" fill="#585858"/></svg>
<span class="t" style="left:1964.06px;top:871.94px;font-size:23.5px;line-height:28px;color:#d2d2d2;letter-spacing:1.28px;">Agents</span>
<span class="t" style="left:1964.06px;top:909.44px;font-size:23.5px;line-height:28px;color:#d2d2d2;letter-spacing:0.92px;">Show Path Polygons</span>
<div style="left:2286px;top:909px;width:28px;height:28px;background:#2c2c2c;border-radius:4px;box-shadow:inset 0 0 0 1px #1e1e1e;"></div>
<svg style="left:2288px;top:911px;" width="24" height="24" viewBox="-12 -12 24 24"><path d="M-7 0.5 L-2.5 5 L7 -5.5" fill="none" stroke="#f0f0f0" stroke-width="2.8"/></svg>
<span class="t" style="left:1964.06px;top:941.44px;font-size:23.5px;line-height:28px;color:#d2d2d2;letter-spacing:0.94px;">Show Path Query Nodes</span>
<div style="left:2286px;top:941px;width:28px;height:28px;background:#2c2c2c;border-radius:4px;box-shadow:inset 0 0 0 1px #1e1e1e;"></div>
<span class="t" style="left:1964.06px;top:973.44px;font-size:23.5px;line-height:28px;color:#d2d2d2;letter-spacing:1.09px;">Show Neighbours</span>
<div style="left:2286px;top:973px;width:28px;height:28px;background:#2c2c2c;border-radius:4px;box-shadow:inset 0 0 0 1px #1e1e1e;"></div>
<span class="t" style="left:1964.06px;top:1005.44px;font-size:23.5px;line-height:28px;color:#d2d2d2;letter-spacing:0.95px;">Show Walls</span>
<div style="left:2286px;top:1005px;width:28px;height:28px;background:#2c2c2c;border-radius:4px;box-shadow:inset 0 0 0 1px #1e1e1e;"></div>
<span class="t" style="left:1964.06px;top:1037.44px;font-size:23.5px;line-height:28px;color:#d2d2d2;letter-spacing:1.18px;">Show Avoidance</span>
<div style="left:2286px;top:1037px;width:28px;height:28px;background:#2c2c2c;border-radius:4px;box-shadow:inset 0 0 0 1px #1e1e1e;"></div>
<svg style="left:1935.5px;top:1086px;" width="19" height="18" viewBox="-9.5 -9 19 18"><polygon points="-8.5,-8.0 8.5,-8.0 0,8.0" fill="#585858"/></svg>
<span class="t" style="left:1964.06px;top:1081.44px;font-size:23.5px;line-height:28px;color:#d2d2d2;letter-spacing:1.09px;">Obstacles</span>
<span class="t" style="left:1964.06px;top:1119.44px;font-size:23.5px;line-height:28px;color:#d2d2d2;letter-spacing:0.82px;">Show Carve Hull</span>
<div style="left:2286px;top:1119px;width:28px;height:28px;background:#2c2c2c;border-radius:4px;box-shadow:inset 0 0 0 1px #1e1e1e;"></div>
<div style="left:2334px;top:192px;width:682px;height:38px;background:#282828;border-radius:6px 6px 0 0;"></div>
<div style="left:2334px;top:192px;width:186px;height:38px;background:#3c3c3c;border-radius:4px 4px 0 0;"></div>
<svg style="left:2350px;top:200px;" width="24" height="24" viewBox="-12 -12 24 24"><circle r="10" fill="#c4c4c4"/><rect x="-1.6" y="-2" width="3.2" height="7.5" fill="#3c3c3c"/><circle cy="-5" r="1.9" fill="#3c3c3c"/></svg>
<span class="t" style="left:2381.56px;top:199.24px;font-size:23.5px;line-height:28px;color:#d2d2d2;letter-spacing:1.02px;">Inspector</span>
<svg style="left:2944px;top:198px;" width="20" height="24" viewBox="-10 -12 20 24"><rect x="-7" y="0" width="14" height="8.5" rx="1" fill="none" stroke="#c4c4c4" stroke-width="2"/><path d="M-6.2 -3.4 V-4.6 A4.7 4.7 0 0 1 3.2 -4.6 V0" fill="none" stroke="#c4c4c4" stroke-width="2"/></svg>
<svg style="left:2984px;top:198px;" width="8" height="24" viewBox="-4 -12 8 24"><circle cy="-7.5" r="2.5" fill="#c4c4c4"/><circle cy="0" r="2.5" fill="#c4c4c4"/><circle cy="7.5" r="2.5" fill="#c4c4c4"/></svg>
<div style="left:2334px;top:230px;width:682px;height:146px;background:#3c3c3c;"></div>
<div style="left:2334px;top:376px;width:682px;height:2px;background:#1f1f1f;"></div>
<div style="left:2334px;top:378px;width:682px;height:1327px;background:#383838;"></div>
<svg style="left:2354px;top:254px" width="48" height="40" viewBox="0 0 48 40"><path d="M0 3 Q0 0 3 0 H17 L22 6.5 H45 Q48 6.5 48 9.5 V37 Q48 40 45 40 H3 Q0 40 0 37 Z" fill="#c2c2c2"/></svg>
<span class="t" style="left:2424.96px;top:240.24px;font-size:26px;line-height:31px;color:#b4b4b4;letter-spacing:1.23px;">Tuna (Default Asset)</span>
<svg style="left:2996px;top:244px;" width="8" height="24" viewBox="-4 -12 8 24"><circle cy="-7.5" r="2.5" fill="#c4c4c4"/><circle cy="0" r="2.5" fill="#c4c4c4"/><circle cy="7.5" r="2.5" fill="#c4c4c4"/></svg>
<div style="left:2922px;top:288px;width:84px;height:33px;background:#545454;border-radius:4px;box-shadow:0 0 0 1px #2c2c2c;"></div>
<span class="t" style="left:2934.06px;top:290.44px;font-size:23.5px;line-height:28px;color:#e0e0e0;letter-spacing:0.71px;">Open</span>
<div style="left:2341px;top:332px;width:26px;height:26px;background:#2a2a2a;border-radius:4px;box-shadow:0 0 0 1px #1c1c1c;"></div>
<span class="t" style="left:2374.06px;top:333.94px;font-size:23.5px;line-height:28px;color:#d2d2d2;letter-spacing:0.70px;">Addressable</span>
<div style="left:2334px;top:1704px;width:682px;height:2px;background:#1f1f1f;"></div>
<div style="left:2334px;top:1706px;width:682px;height:40px;background:#3c3c3c;"></div>
<span class="t" style="left:2348.56px;top:1713.44px;font-size:23.5px;line-height:28px;color:#cfcfcf;font-weight:700;letter-spacing:0.70px;">Asset Labels</span>
<div style="left:2334px;top:1746px;width:682px;height:2px;background:#1f1f1f;"></div>
<div style="left:2334px;top:1748px;width:682px;height:98px;background:#3c3c3c;"></div>
<div style="left:2969px;top:1759px;width:37px;height:29px;background:#254b93;border-radius:14px;"></div>
<svg style="left:2973.5px;top:1759.5px;" width="28" height="28" viewBox="-14 -14 28 28"><g transform="scale(-0.82,0.82)"><path d="M-11 3 L1 -8.6 L10 -9.6 L9.4 -0.8 L-3 10.6 Z" fill="#ffffff"/><circle cx="5.8" cy="-5.4" r="1.9" fill="#254b93"/></g></svg>
<span class="t" style="left:2342.06px;top:1807.44px;font-size:23.5px;line-height:28px;color:#c4c4c4;letter-spacing:0.76px;">AssetBundle</span>
<div style="left:2526px;top:1803.5px;width:348px;height:32.5px;background:#515151;border-radius:4px;box-shadow:0 0 0 1px #303030;"></div>
<span class="t" style="left:2532.06px;top:1806.44px;font-size:23.5px;line-height:28px;color:#e0e0e0;letter-spacing:1.04px;">None</span>
<svg style="left:2848px;top:1816px;" width="16" height="10" viewBox="-8 -5 16 10"><polygon points="-7.0,-4.0 7.0,-4.0 0,4.0" fill="#c4c4c4"/></svg>
<div style="left:2888px;top:1803.5px;width:120px;height:32.5px;background:#515151;border-radius:4px;box-shadow:0 0 0 1px #303030;"></div>
<span class="t" style="left:2894.06px;top:1806.44px;font-size:23.5px;line-height:28px;color:#e0e0e0;letter-spacing:1.04px;">None</span>
<svg style="left:2982px;top:1816px;" width="16" height="10" viewBox="-8 -5 16 10"><polygon points="-7.0,-4.0 7.0,-4.0 0,4.0" fill="#c4c4c4"/></svg>
<div style="left:112px;top:1172px;width:2218px;height:38px;background:#282828;border-radius:6px 6px 0 0;"></div>
<div style="left:112px;top:1172px;width:160px;height:38px;background:#3c3c3c;border-radius:4px 4px 0 0;box-shadow:inset 0 4px 0 #315f8b;"></div>
<svg style="left:126px;top:1182px;" width="24" height="20" viewBox="-12 -10 24 20"><path d="M-12 -8.5 Q-12 -10 -10.5 -10 H-3.5 L-1 -6.5 H10.5 Q12 -6.5 12 -5 V8.5 Q12 10 10.5 10 H-10.5 Q-12 10 -12 8.5 Z" fill="#c4c4c4"/></svg>
<span class="t" style="left:158.56px;top:1179.44px;font-size:23.5px;line-height:28px;color:#d2d2d2;letter-spacing:1.03px;">Project</span>
<svg style="left:290px;top:1179px;" width="24" height="24" viewBox="-12 -12 24 24"><rect x="-10" y="-10.5" width="20" height="21" rx="2" fill="#c4c4c4"/><path d="M-7 -6.5 H7 M-7 -2.5 H4 M-7 1.5 H7 M-7 5.5 H4" stroke="#282828" stroke-width="1.8"/></svg>
<span class="t" style="left:322.06px;top:1179.44px;font-size:23.5px;line-height:28px;color:#d2d2d2;letter-spacing:0.87px;">Console</span>
<svg style="left:2260px;top:1177.5px;" width="20" height="24" viewBox="-10 -12 20 24"><rect x="-7" y="0" width="14" height="8.5" rx="1" fill="none" stroke="#c4c4c4" stroke-width="2"/><path d="M-6.2 -3.4 V-4.6 A4.7 4.7 0 0 1 3.2 -4.6 V0" fill="none" stroke="#c4c4c4" stroke-width="2"/></svg>
<svg style="left:2300px;top:1178px;" width="8" height="24" viewBox="-4 -12 8 24"><circle cy="-7.5" r="2.5" fill="#c4c4c4"/><circle cy="0" r="2.5" fill="#c4c4c4"/><circle cy="7.5" r="2.5" fill="#c4c4c4"/></svg>
<div style="left:112px;top:1210px;width:2218px;height:40px;background:#3c3c3c;"></div>
<div style="left:112px;top:1250px;width:2218px;height:1px;background:#232323;"></div>
<svg style="left:125px;top:1217px;" width="26" height="26" viewBox="-13 -13 26 26"><rect x="-12" y="-2" width="24" height="4" fill="#c4c4c4"/><rect x="-2" y="-12" width="4" height="24" fill="#c4c4c4"/></svg>
<svg style="left:158px;top:1225px;" width="16" height="10" viewBox="-8 -5 16 10"><polygon points="-7.0,-4.0 7.0,-4.0 0,4.0" fill="#c4c4c4"/></svg>
<div style="left:1403px;top:1214px;width:634px;height:31px;background:#2a2a2a;border-radius:6px;box-shadow:inset 0 0 0 1px #212121;"></div>
<div style="left:2005px;top:1215px;width:31px;height:29px;background:#353535;border-radius:0 5px 5px 0;"></div>
<svg style="left:1407px;top:1221px;" width="24" height="18" viewBox="-12 -9 24 18"><circle cx="-2.5" cy="-2" r="4" fill="none" stroke="#c4c4c4" stroke-width="2.2"/><path d="M0.8 1.4 L5.2 6" stroke="#c4c4c4" stroke-width="2.8" stroke-linecap="round"/></svg>
<svg style="left:2006px;top:1216px;" width="28" height="28" viewBox="-14 -14 28 28"><path d="M-7 -3 V-11 H11 V7 H3" fill="none" stroke="#c4c4c4" stroke-width="2"/><rect x="-11" y="2" width="9" height="9" fill="none" stroke="#c4c4c4" stroke-width="2"/><path d="M-2 2 L6 -6 M0 -6.5 H6.5 V0" fill="none" stroke="#c4c4c4" stroke-width="2"/></svg>
<div style="left:2042px;top:1211px;width:2px;height:39px;background:#303030;"></div>
<div style="left:2094px;top:1211px;width:2px;height:39px;background:#303030;"></div>
<div style="left:2146px;top:1211px;width:2px;height:39px;background:#303030;"></div>
<div style="left:2198px;top:1211px;width:2px;height:39px;background:#303030;"></div>
<div style="left:2250px;top:1211px;width:2px;height:39px;background:#303030;"></div>
<svg style="left:2053px;top:1214px;" width="30" height="30" viewBox="-15 -15 30 30"><rect x="-6" y="-13" width="11" height="11" fill="#c4c4c4"/><circle cx="-4" cy="6" r="7.5" fill="#c4c4c4"/><polygon points="7,-3 13.5,9 1.5,9" fill="#c4c4c4" stroke="#3c3c3c" stroke-width="1.5"/></svg>
<svg style="left:2106px;top:1215px;" width="28" height="28" viewBox="-14 -14 28 28"><g transform="scale(1,1)"><path d="M-11 3 L1 -8.6 L10 -9.6 L9.4 -0.8 L-3 10.6 Z" fill="#c4c4c4"/><circle cx="5.8" cy="-5.4" r="1.9" fill="#3c3c3c"/></g></svg>
<svg style="left:2157px;top:1214px;" width="30" height="30" viewBox="-15 -15 30 30"><polygon points="-5.5,-13 5.5,-13 13,-5.5 13,5.5 5.5,13 -5.5,13 -13,5.5 -13,-5.5" fill="#dcdcdc"/><rect x="-1.6" y="-8" width="3.2" height="10" rx="1.5" fill="#3c3c3c"/><circle cy="6" r="2" fill="#3c3c3c"/></svg>
<svg style="left:2210px;top:1216px;" width="28" height="28" viewBox="-14 -14 28 28"><polygon points="0.00,-11.00 3.53,-3.85 11.41,-2.71 5.71,2.85 7.05,10.71 0.00,7.00 -7.05,10.71 -5.71,2.85 -11.41,-2.71 -3.53,-3.85" fill="#8a8a8a" stroke="#8a8a8a" stroke-width="1" stroke-linejoin="round"/></svg>
<svg style="left:2259px;top:1216px;" width="34" height="28" viewBox="-17 -14 34 28"><path d="M-14 1 C-9 -7 9 -7 14 1 C9 9 -9 9 -14 1 Z" fill="none" stroke="#c4c4c4" stroke-width="2.2"/><circle cx="1" cy="1" r="4" fill="none" stroke="#c4c4c4" stroke-width="2.2"/><path d="M-11 11 L12 -11" stroke="#c4c4c4" stroke-width="2.6"/></svg>
<span class="t" style="left:2295.06px;top:1216.94px;font-size:23.5px;line-height:28px;color:#c4c4c4;letter-spacing:-1.20px;">51</span>
<div style="left:112px;top:1251px;width:414px;height:595px;background:#383838;"></div>
<div style="left:500px;top:1251px;width:26px;height:595px;background:#353535;"></div>
<div style="left:526px;top:1251px;width:2px;height:595px;background:#232323;"></div>
<div style="left:504.5px;top:1285px;width:18.5px;height:174px;background:#5f5f5f;border-radius:9px;"></div>
<svg style="left:506px;top:1263px;" width="16" height="10" viewBox="-8 -5 16 10"><polygon points="-7.0,4.0 7.0,4.0 0,-4.0" fill="#c4c4c4"/></svg>
<svg style="left:506px;top:1825px;" width="16" height="10" viewBox="-8 -5 16 10"><polygon points="-7.0,-4.0 7.0,-4.0 0,4.0" fill="#c4c4c4"/></svg>
<div style="left:112px;top:1537.5px;width:388px;height:32px;background:#4d4d4d;"></div>
<svg style="left:119.5px;top:1259.7px;" width="19" height="18" viewBox="-9.5 -9 19 18"><polygon points="-8.5,-8.0 8.5,-8.0 0,8.0" fill="#6a6a6a"/></svg>
<svg style="left:145.7px;top:1253px;" width="28" height="28" viewBox="-14 -14 28 28"><polygon points="0.00,-10.50 3.38,-3.65 10.94,-2.55 5.47,2.78 6.76,10.30 0.00,6.75 -6.76,10.30 -5.47,2.78 -10.94,-2.55 -3.38,-3.65" fill="#d2d2d2" stroke="#d2d2d2" stroke-width="1" stroke-linejoin="round"/></svg>
<span class="t" style="left:181.56px;top:1253.44px;font-size:23.5px;line-height:28px;color:#d6d6d6;font-weight:700;letter-spacing:0.65px;">Favorites</span>
<svg style="left:174px;top:1285px;" width="28" height="28" viewBox="-14 -14 28 28"><circle cx="-3.6" cy="-2.8" r="7.6" fill="none" stroke="#c4c4c4" stroke-width="1.9"/><path d="M3.4 4.6 L8.6 9.6" stroke="#c4c4c4" stroke-width="3.4" stroke-linecap="round"/></svg>
<span class="t" style="left:208.56px;top:1285.44px;font-size:23.5px;line-height:28px;color:#d2d2d2;letter-spacing:0.37px;">All In Progress</span>
<svg style="left:174px;top:1317px;" width="28" height="28" viewBox="-14 -14 28 28"><circle cx="-3.6" cy="-2.8" r="7.6" fill="none" stroke="#c4c4c4" stroke-width="1.9"/><path d="M3.4 4.6 L8.6 9.6" stroke="#c4c4c4" stroke-width="3.4" stroke-linecap="round"/></svg>
<span class="t" style="left:208.56px;top:1317.44px;font-size:23.5px;line-height:28px;color:#d2d2d2;letter-spacing:0.95px;">All Modified</span>
<svg style="left:174px;top:1349px;" width="28" height="28" viewBox="-14 -14 28 28"><circle cx="-3.6" cy="-2.8" r="7.6" fill="none" stroke="#c4c4c4" stroke-width="1.9"/><path d="M3.4 4.6 L8.6 9.6" stroke="#c4c4c4" stroke-width="3.4" stroke-linecap="round"/></svg>
<span class="t" style="left:208.56px;top:1349.44px;font-size:23.5px;line-height:28px;color:#d2d2d2;letter-spacing:0.93px;">All Conflicts</span>
<svg style="left:174px;top:1381px;" width="28" height="28" viewBox="-14 -14 28 28"><circle cx="-3.6" cy="-2.8" r="7.6" fill="none" stroke="#c4c4c4" stroke-width="1.9"/><path d="M3.4 4.6 L8.6 9.6" stroke="#c4c4c4" stroke-width="3.4" stroke-linecap="round"/></svg>
<span class="t" style="left:208.56px;top:1381.44px;font-size:23.5px;line-height:28px;color:#d2d2d2;letter-spacing:0.59px;">All Excluded</span>
<svg style="left:119.5px;top:1449.7px;" width="19" height="18" viewBox="-9.5 -9 19 18"><polygon points="-8.5,-8.0 8.5,-8.0 0,8.0" fill="#6a6a6a"/></svg>
<svg style="left:145.5px;top:1447.5px;" width="30" height="22" viewBox="-15 -11 30 22"><path d="M-12.5 9 V-8.5 Q-12.5 -10 -11 -10 H-4.5 L-2 -6.5 H8 Q9.5 -6.5 9.5 -5 V-2.5" fill="none" stroke="#c4c4c4" stroke-width="2"/><path d="M-8 -2.5 H13.5 L9.5 10 H-13 Z" fill="#c4c4c4"/></svg>
<span class="t" style="left:181.56px;top:1443.44px;font-size:23.5px;line-height:28px;color:#d6d6d6;font-weight:700;letter-spacing:1.21px;">Assets</span>
<svg style="left:176px;top:1480px;" width="24" height="20" viewBox="-12 -10 24 20"><path d="M-12 -8.5 Q-12 -10 -10.5 -10 H-3.5 L-1 -6.5 H10.5 Q12 -6.5 12 -5 V8.5 Q12 10 10.5 10 H-10.5 Q-12 10 -12 8.5 Z" fill="#c4c4c4"/></svg>
<span class="t" style="left:208.56px;top:1475.44px;font-size:23.5px;line-height:28px;color:#d2d2d2;letter-spacing:0.91px;">Scenes</span>
<svg style="left:176px;top:1512px;" width="24" height="20" viewBox="-12 -10 24 20"><path d="M-12 -8.5 Q-12 -10 -10.5 -10 H-3.5 L-1 -6.5 H10.5 Q12 -6.5 12 -5 V8.5 Q12 10 10.5 10 H-10.5 Q-12 10 -12 8.5 Z" fill="#c4c4c4"/></svg>
<span class="t" style="left:208.56px;top:1507.44px;font-size:23.5px;line-height:28px;color:#d2d2d2;letter-spacing:0.93px;">Settings</span>
<svg style="left:176px;top:1544px;" width="24" height="20" viewBox="-12 -10 24 20"><path d="M-12 -8.5 Q-12 -10 -10.5 -10 H-3.5 L-1 -6.5 H10.5 Q12 -6.5 12 -5 V8.5 Q12 10 10.5 10 H-10.5 Q-12 10 -12 8.5 Z" fill="#c4c4c4"/></svg>
<span class="t" style="left:208.56px;top:1539.44px;font-size:23.5px;line-height:28px;color:#d2d2d2;letter-spacing:1.16px;">Tuna</span>
<svg style="left:149.5px;top:1576px;" width="17" height="19" viewBox="-8.5 -9.5 17 19"><polygon points="-7.5,-8.5 7.5,0 -7.5,8.5" fill="#6a6a6a"/></svg>
<svg style="left:176px;top:1576px;" width="24" height="20" viewBox="-12 -10 24 20"><path d="M-12 -8.5 Q-12 -10 -10.5 -10 H-3.5 L-1 -6.5 H10.5 Q12 -6.5 12 -5 V8.5 Q12 10 10.5 10 H-10.5 Q-12 10 -12 8.5 Z" fill="#c4c4c4"/></svg>
<span class="t" style="left:208.56px;top:1571.44px;font-size:23.5px;line-height:28px;color:#d2d2d2;letter-spacing:0.97px;">TutorialInfo</span>
<svg style="left:149.5px;top:1608px;" width="17" height="19" viewBox="-8.5 -9.5 17 19"><polygon points="-7.5,-8.5 7.5,0 -7.5,8.5" fill="#6a6a6a"/></svg>
<svg style="left:176px;top:1608px;" width="24" height="20" viewBox="-12 -10 24 20"><path d="M-12 -8.5 Q-12 -10 -10.5 -10 H-3.5 L-1 -6.5 H10.5 Q12 -6.5 12 -5 V8.5 Q12 10 10.5 10 H-10.5 Q-12 10 -12 8.5 Z" fill="#c4c4c4"/></svg>
<span class="t" style="left:208.56px;top:1603.44px;font-size:23.5px;line-height:28px;color:#d2d2d2;letter-spacing:0.87px;width:290.5px;overflow:hidden;">Unity.VisualScripting.Generated</span>
<svg style="left:149.5px;top:1640px;" width="17" height="19" viewBox="-8.5 -9.5 17 19"><polygon points="-7.5,-8.5 7.5,0 -7.5,8.5" fill="#6a6a6a"/></svg>
<svg style="left:176px;top:1640px;" width="24" height="20" viewBox="-12 -10 24 20"><path d="M-12 -8.5 Q-12 -10 -10.5 -10 H-3.5 L-1 -6.5 H10.5 Q12 -6.5 12 -5 V8.5 Q12 10 10.5 10 H-10.5 Q-12 10 -12 8.5 Z" fill="#c4c4c4"/></svg>
<span class="t" style="left:208.56px;top:1635.44px;font-size:23.5px;line-height:28px;color:#d2d2d2;letter-spacing:-0.90px;">XR</span>
<svg style="left:149.5px;top:1672px;" width="17" height="19" viewBox="-8.5 -9.5 17 19"><polygon points="-7.5,-8.5 7.5,0 -7.5,8.5" fill="#6a6a6a"/></svg>
<svg style="left:176px;top:1672px;" width="24" height="20" viewBox="-12 -10 24 20"><path d="M-12 -8.5 Q-12 -10 -10.5 -10 H-3.5 L-1 -6.5 H10.5 Q12 -6.5 12 -5 V8.5 Q12 10 10.5 10 H-10.5 Q-12 10 -12 8.5 Z" fill="#c4c4c4"/></svg>
<span class="t" style="left:208.56px;top:1667.44px;font-size:23.5px;line-height:28px;color:#d2d2d2;letter-spacing:-0.45px;">XRI</span>
<svg style="left:119.5px;top:1705.7px;" width="19" height="18" viewBox="-9.5 -9 19 18"><polygon points="-8.5,-8.0 8.5,-8.0 0,8.0" fill="#6a6a6a"/></svg>
<svg style="left:145.5px;top:1703.5px;" width="30" height="22" viewBox="-15 -11 30 22"><path d="M-12.5 9 V-8.5 Q-12.5 -10 -11 -10 H-4.5 L-2 -6.5 H8 Q9.5 -6.5 9.5 -5 V-2.5" fill="none" stroke="#c4c4c4" stroke-width="2"/><path d="M-8 -2.5 H13.5 L9.5 10 H-13 Z" fill="#c4c4c4"/></svg>
<span class="t" style="left:181.56px;top:1699.44px;font-size:23.5px;line-height:28px;color:#d6d6d6;font-weight:700;letter-spacing:0.99px;">Packages</span>
<svg style="left:149.5px;top:1736px;" width="17" height="19" viewBox="-8.5 -9.5 17 19"><polygon points="-7.5,-8.5 7.5,0 -7.5,8.5" fill="#6a6a6a"/></svg>
<svg style="left:176px;top:1736px;" width="24" height="20" viewBox="-12 -10 24 20"><path d="M-12 -8.5 Q-12 -10 -10.5 -10 H-3.5 L-1 -6.5 H10.5 Q12 -6.5 12 -5 V8.5 Q12 10 10.5 10 H-10.5 Q-12 10 -12 8.5 Z" fill="#c4c4c4"/></svg>
<span class="t" style="left:208.56px;top:1731.44px;font-size:23.5px;line-height:28px;color:#d2d2d2;letter-spacing:0.65px;">2D Sprite</span>
<svg style="left:149.5px;top:1768px;" width="17" height="19" viewBox="-8.5 -9.5 17 19"><polygon points="-7.5,-8.5 7.5,0 -7.5,8.5" fill="#6a6a6a"/></svg>
<svg style="left:176px;top:1768px;" width="24" height="20" viewBox="-12 -10 24 20"><path d="M-12 -8.5 Q-12 -10 -10.5 -10 H-3.5 L-1 -6.5 H10.5 Q12 -6.5 12 -5 V8.5 Q12 10 10.5 10 H-10.5 Q-12 10 -12 8.5 Z" fill="#c4c4c4"/></svg>
<span class="t" style="left:208.56px;top:1763.44px;font-size:23.5px;line-height:28px;color:#d2d2d2;letter-spacing:0.66px;">Addressables</span>
<svg style="left:149.5px;top:1800px;" width="17" height="19" viewBox="-8.5 -9.5 17 19"><polygon points="-7.5,-8.5 7.5,0 -7.5,8.5" fill="#6a6a6a"/></svg>
<svg style="left:176px;top:1800px;" width="24" height="20" viewBox="-12 -10 24 20"><path d="M-12 -8.5 Q-12 -10 -10.5 -10 H-3.5 L-1 -6.5 H10.5 Q12 -6.5 12 -5 V8.5 Q12 10 10.5 10 H-10.5 Q-12 10 -12 8.5 Z" fill="#c4c4c4"/></svg>
<span class="t" style="left:208.56px;top:1795.44px;font-size:23.5px;line-height:28px;color:#d2d2d2;letter-spacing:0.77px;">AI Navigation</span>
<div style="left:112px;top:1825px;width:388px;height:21px;overflow:hidden;">
<div style="left:-112px;top:-1825px;width:10px;height:10px;">
<svg style="left:149.5px;top:1832px;" width="17" height="19" viewBox="-8.5 -9.5 17 19"><polygon points="-7.5,-8.5 7.5,0 -7.5,8.5" fill="#6a6a6a"/></svg>
<svg style="left:176px;top:1832px;" width="24" height="20" viewBox="-12 -10 24 20"><path d="M-12 -8.5 Q-12 -10 -10.5 -10 H-3.5 L-1 -6.5 H10.5 Q12 -6.5 12 -5 V8.5 Q12 10 10.5 10 H-10.5 Q-12 10 -12 8.5 Z" fill="#c4c4c4"/></svg>
<span class="t" style="left:208.56px;top:1827.44px;font-size:23.5px;line-height:28px;color:#d2d2d2;letter-spacing:0.88px;">Android Logcat</span>
</div></div>
<div style="left:528px;top:1251px;width:1802px;height:43px;background:#3c3c3c;"></div>
<div style="left:528px;top:1294px;width:1802px;height:510px;background:#333333;"></div>
<div style="left:528px;top:1804px;width:1802px;height:42px;background:#3e3e3e;"></div>
<span class="t" style="left:536.06px;top:1258.44px;font-size:23.5px;line-height:28px;color:#bdbdbd;letter-spacing:0.64px;">Assets</span>
<svg style="left:623px;top:1261px;" width="14" height="22" viewBox="-7 -11 14 22"><path d="M-4 -8.5 L4 0 L-4 8.5" fill="none" stroke="#8a8a8a" stroke-width="2.4"/></svg>
<span class="t" style="left:646.06px;top:1258.44px;font-size:23.5px;line-height:28px;color:#d0d0d0;font-weight:700;letter-spacing:0.86px;">Tuna</span>
<svg style="left:538px;top:1815px;" width="24" height="20" viewBox="-12 -10 24 20"><path d="M-12 -8.5 Q-12 -10 -10.5 -10 H-3.5 L-1 -6.5 H10.5 Q12 -6.5 12 -5 V8.5 Q12 10 10.5 10 H-10.5 Q-12 10 -12 8.5 Z" fill="#c4c4c4"/></svg>
<span class="t" style="left:568.56px;top:1811.94px;font-size:23.5px;line-height:28px;color:#c4c4c4;letter-spacing:0.87px;">Assets/Tuna</span>
<div style="left:2188px;top:1823.5px;width:110px;height:3px;background:#5e5e5e;border-radius:2px;"></div>
<div style="left:2242px;top:1815px;width:20px;height:20px;background:#999999;border-radius:50%;"></div>
<div style="left:562px;top:1318px;width:120px;height:120px;background:linear-gradient(#565656,#4b4b4b);"></div>
<svg style="left:582px;top:1346px;opacity:.8" width="90" height="56" viewBox="-45 -28 90 56"><g transform="scale(1.18)"><path d="M-30 -8 C-25 -3 -22 -1 -18 0 C-8 -8 12 -8 30 6 C22 14 0 16 -16 6 C-20 6 -26 8 -32 12 C-28 6 -26 2 -26 0 C-27 -3 -28 -5 -30 -8 Z" fill="#5d6570"/><path d="M-14 -4 L-10 -15 L-2 -6 Z" fill="#555c66"/><path d="M-12 0 C0 -5 14 -3 26 5 C12 1 0 1 -12 3 Z" fill="#8a94a2" opacity=".7"/><path d="M4 9 L10 15 L14 9 Z" fill="#4a515b"/></g></svg>
<div style="left:670px;top:1360px;width:32px;height:32px;background:#d2d2d2;border-radius:50%;box-shadow:0 1px 3px rgba(0,0,0,.5);"></div>
<svg style="left:677px;top:1366px;" width="20" height="20" viewBox="-10 -10 20 20"><polygon points="-6,-7.5 8,0 -6,7.5" fill="#2b2b2b"/></svg>
<svg style="left:552px;top:1446px;" width="22" height="24" viewBox="-11 -12 22 24"><polygon points="0,-10 9.5,-5 0,0 -9.5,-5" fill="#bfe3f8"/><polygon points="-9.5,-5 0,0 0,10.5 -9.5,5.5" fill="#e8e8e8"/><polygon points="9.5,-5 0,0 0,10.5 9.5,5.5" fill="#6cb6ea"/><polygon points="-6.5,-3.4 -3,-1.6 -3,3 -6.5,1.2" fill="#3a3a3a"/></svg>
<span class="t" style="left:577.72px;top:1447.95px;font-size:19.5px;line-height:23px;color:#d2d2d2;letter-spacing:0.50px;">uploads_fil...</span>
<div style="left:533px;top:1301.5px;width:181px;height:184.5px;border:4px solid #df4b2a;border-radius:18px;"></div>
<svg style="left:2815px;top:1854px;" width="32" height="32" viewBox="-16 -16 32 32"><ellipse cx="0" cy="3" rx="7.5" ry="9.5" fill="#c4c4c4"/><circle cx="0" cy="-7" r="4.5" fill="#c4c4c4"/><path d="M-7 -2 L-12 -6 M7 -2 L12 -6 M-8 4 H-13 M8 4 H13 M-6 9 L-11 13 M6 9 L11 13 M-3 -10 L-6 -14 M3 -10 L6 -14" stroke="#c4c4c4" stroke-width="2"/><path d="M-12 -12 L13 13" stroke="#191919" stroke-width="5"/><path d="M-13 -12 L12 13" stroke="#c4c4c4" stroke-width="2"/></svg>
<svg style="left:2869px;top:1854px;" width="32" height="32" viewBox="-16 -16 32 32"><ellipse cx="0" cy="-8" rx="11" ry="4.5" fill="#c4c4c4"/><path d="M-11 -4.5 C-11 1 11 1 11 -4.5 V0 C11 5.5 -11 5.5 -11 0 Z M-11 3 C-11 8.5 11 8.5 11 3 V8 C11 13.5 -11 13.5 -11 8 Z" fill="#c4c4c4"/><path d="M-12 -12 L13 13" stroke="#191919" stroke-width="5"/><path d="M-13 -12 L12 13" stroke="#c4c4c4" stroke-width="2"/></svg>
<svg style="left:2921.5px;top:1854px;" width="32" height="32" viewBox="-16 -16 32 32"><path d="M-11 -3 A11.5 11.5 0 0 1 9 -7 M11 3 A11.5 11.5 0 0 1 -9 7" fill="none" stroke="#c4c4c4" stroke-width="2.2"/><polygon points="6,-12 12,-5 4,-4" fill="#c4c4c4"/><polygon points="-6,12 -12,5 -4,4" fill="#c4c4c4"/><circle cx="0" cy="-2" r="5" fill="#c4c4c4"/><rect x="-2.5" y="3" width="5" height="4" fill="#c4c4c4"/><path d="M-12 -12 L13 13" stroke="#191919" stroke-width="5"/><path d="M-13 -12 L12 13" stroke="#c4c4c4" stroke-width="2"/></svg>
<svg style="left:2973px;top:1854px;" width="32" height="32" viewBox="-16 -16 32 32"><circle r="13" fill="none" stroke="#c4c4c4" stroke-width="2"/><path d="M-5.5 0.5 L-1.5 4.5 L6 -4" fill="none" stroke="#c4c4c4" stroke-width="2.6"/></svg>
</div>
<div id="rim"></div>
</body></html>
